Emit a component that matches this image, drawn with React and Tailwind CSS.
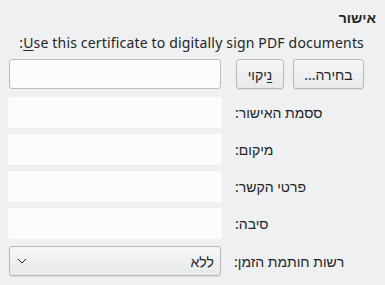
const font = { fontFamily: '"Noto Sans", "Liberation Sans", sans-serif' }

const Field = ({ label }) => (
  <div className="flex items-center h-[31px]">
    <div className="w-[214px] h-[31px] bg-[#fcfcfc] rounded-[2px]" />
    <span dir="rtl" className="ml-[13px] text-[14px] text-[#232629]">{label}</span>
  </div>
)

const App = () => {
  return (
    <div className="w-[385px] h-[285px] bg-[#eff0f1] overflow-hidden text-[#232629]" style={font}>
      <div className="flex justify-end pr-[9px] pt-[8px] h-[20px] items-center box-content">
        <span dir="rtl" className="text-[14px] font-bold leading-none">אישור</span>
      </div>
      <div className="flex justify-end pr-[21px] mt-[5px] h-[20px] items-center">
        <span className="text-[14px] leading-none tracking-[0.17px]">:<span className="underline underline-offset-2">U</span>se this certificate to digitally sign PDF documents</span>
      </div>
      <div className="flex items-center pl-[9px] mt-[6px] h-[30px]">
        <div className="w-[212px] h-[30px] bg-[#fcfcfc] border border-[#bcbebf] rounded-[3px]" />
        <button className="ml-[15px] w-[48px] h-[30px] border border-[#b6b8ba] rounded-[3px] bg-gradient-to-b from-[#f5f6f7] to-[#e8e9ea] text-[14px] shadow-[0_1px_1px_rgba(0,0,0,0.08)]">
          <span dir="rtl"><span className="underline underline-offset-2">נ</span>יקוי</span>
        </button>
        <button className="ml-[9px] w-[71px] h-[30px] border border-[#b6b8ba] rounded-[3px] bg-gradient-to-b from-[#f5f6f7] to-[#e8e9ea] text-[14px] shadow-[0_1px_1px_rgba(0,0,0,0.08)]">
          <span dir="rtl">בחירה...</span>
        </button>
      </div>
      <div className="flex flex-col gap-[6px] pl-[8px] mt-[8px]">
        <Field label="ססמת האישור:" />
        <Field label="מיקום:" />
        <Field label="פרטי הקשר:" />
        <Field label="סיבה:" />
        <div className="flex items-center h-[30px] mt-[1px]">
          <div className="ml-[1px] w-[212px] h-[30px] border border-[#b6b8ba] rounded-[3px] bg-gradient-to-b from-[#f5f6f7] to-[#e8e9ea] flex items-center justify-between px-[6px] shadow-[0_1px_1px_rgba(0,0,0,0.08)]">
            <svg width="10" height="6" viewBox="0 0 10 6" className="ml-[1px]">
              <path d="M1 1 L5 5 L9 1" fill="none" stroke="#232629" strokeWidth="1" />
            </svg>
            <span dir="rtl" className="text-[14px]">ללא</span>
          </div>
          <span dir="rtl" className="ml-[13px] text-[14px]">רשות חותמת הזמן:</span>
        </div>
      </div>
    </div>
  )
}

export default App
